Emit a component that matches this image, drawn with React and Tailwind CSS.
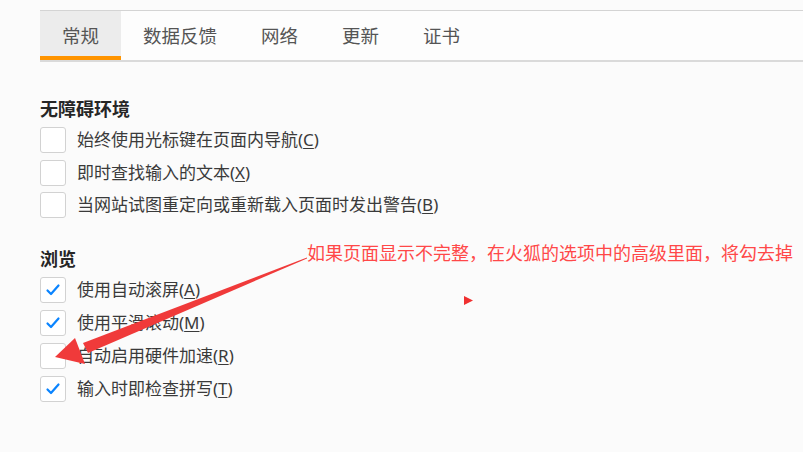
const tabs = ["常规", "数据反馈", "网络", "更新", "证书"];

const Check = ({ checked }) => (
  <div className="w-[26px] h-[26px] shrink-0 rounded-[3px] border border-[#d2d2d2] bg-white flex items-center justify-center">
    {checked && (
      <svg width="16" height="14" viewBox="0 0 16 14">
        <path d="M2.5 7.5 L6 11 L13.5 2.5" fill="none" stroke="#0a84ff" strokeWidth="2.2" strokeLinecap="round" strokeLinejoin="round" />
      </svg>
    )}
  </div>
);

const Row = ({ checked, text, keyChar }) => (
  <div className="flex items-center h-[26px]">
    <Check checked={checked} />
    <span className="ml-[11px] text-[17px] leading-[26px] text-[#3a3a3a]">
      {text}(<span className="underline underline-offset-2">{keyChar}</span>)
    </span>
  </div>
);

export default function App() {
  return (
    <div
      className="relative w-[803px] h-[452px] overflow-hidden bg-[#fbfbfb]"
      style={{ fontFamily: '"Noto Sans", "Noto Sans CJK SC", sans-serif' }}
    >
      {/* tab bar */}
      <div className="mt-[10px] ml-[40px] flex border-t border-[#d4d4d4] border-b-2 border-b-[#dadada] bg-[#fdfdfd]">
        {tabs.map((t, i) => (
          <div
            key={t}
            className={`h-[49px] px-[22px] flex items-center text-[18.5px] text-[#555] ${
              i === 0 ? "bg-[#ececec] border-b-4 border-[#ff9400] pt-[4px]" : ""
            }`}
          >
            {t}
          </div>
        ))}
      </div>

      {/* accessibility */}
      <div className="ml-[40px] mt-[35px]">
        <div className="text-[18px] leading-[24px] font-bold text-[#262626]">无障碍环境</div>
        <div className="mt-[6px] flex flex-col gap-[6.5px]">
          <Row text="始终使用光标键在页面内导航" keyChar="C" />
          <Row text="即时查找输入的文本" keyChar="X" />
          <Row text="当网站试图重定向或重新载入页面时发出警告" keyChar="B" />
        </div>
      </div>

      {/* browsing */}
      <div className="ml-[40px] mt-[29px]">
        <div className="text-[18px] leading-[24px] font-bold text-[#262626]">浏览</div>
        <div className="mt-[5.5px] flex flex-col gap-[7px]">
          <Row checked text="使用自动滚屏" keyChar="A" />
          <Row checked text="使用平滑滚动" keyChar="M" />
          <Row text="自动启用硬件加速" keyChar="R" />
          <Row checked text="输入时即检查拼写" keyChar="T" />
        </div>
      </div>

      {/* annotation */}
      <div className="absolute left-[307px] top-[241px] text-[18px] leading-[24px] text-[#ff4848] whitespace-nowrap">
        如果页面显示不完整，在火狐的选项中的高级里面，将勾去掉
      </div>
      <svg className="absolute left-0 top-0 pointer-events-none" width="803" height="452">
        <polygon points="307,257.5 307,258.5 88,353 83,343" fill="#f03a3a" />
        <polygon points="55,357 75,338 85,364" fill="#f03a3a" />
        <polygon points="464,296 473,300.5 464,305" fill="#f03030" />
      </svg>
    </div>
  );
}
